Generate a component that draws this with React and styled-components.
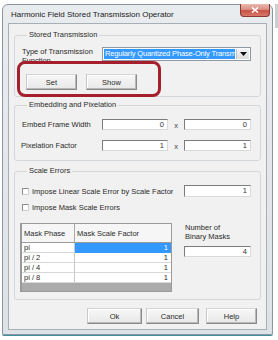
import React from 'react';
import styled, { createGlobalStyle } from 'styled-components';

const Global = createGlobalStyle`
  html, body { margin: 0; padding: 0; background: #fff; }
  body { font-family: "Liberation Sans", Arial, sans-serif; font-size: 7.5px; color: #2a2a2a; }
  #root { width: 278px; height: 340px; overflow: hidden; }
`;

const Page = styled.div`
  display: flex;
  align-items: flex-start;
  width: 278px;
  height: 340px;
`;

const Window = styled.div`
  margin: 4px 0 0 2px;
  width: 271px;
  height: 331px;
  box-sizing: border-box;
  border: 1px solid #8d969e;
  border-radius: 6px 6px 2px 2px;
  background: linear-gradient(#e9ecef, #dde2e7);
  box-shadow: 0 1px 0 #3f8f9d;
  display: flex;
  flex-direction: column;
`;

const Sliver = styled.div`
  margin: 4px 0 0 2px;
  width: 3px;
  height: 24px;
  background: #c9cfd5;
`;

const TitleBar = styled.div`
  height: 18px;
  display: flex;
  align-items: flex-start;
  padding-left: 8px;
`;

const Title = styled.div`
  align-self: center;
  font-size: 8px;
  color: #1a1a1a;
  padding-top: 1px;
`;

const CloseBtn = styled.div`
  margin: -1px 2px 0 auto;
  width: 30px;
  height: 13px;
  box-sizing: border-box;
  border: 1px solid #8a3a33;
  border-top: none;
  border-radius: 0 0 4px 4px;
  background: linear-gradient(#e9b8b0 0%, #dc9084 45%, #c85446 55%, #d9786a 100%);
  display: flex;
  align-items: center;
  justify-content: center;
`;

const Client = styled.div`
  position: relative;
  flex: 1;
  margin: 0 5px 4px 5px;
  border: 1px solid #a6aeb6;
  background: #f1f1f1;
  padding: 6px 5px 0 5px;
  display: flex;
  flex-direction: column;
`;

const Group = styled.fieldset`
  margin: ${p => p.$mt || 0}px 0 0 0;
  padding: ${p => p.$pt}px 9px 0 7px;
  min-width: 0;
  border: 1px solid #d2d7dc;
  border-radius: 3px;
  height: ${p => p.$h}px;
  box-sizing: border-box;
  display: flex;
  flex-direction: column;
`;

const Legend = styled.legend`
  padding: 0 2px;
  margin-left: 5px;
  line-height: 10px;
  color: #2a2a2a;
`;

const Row = styled.div`
  display: flex;
  align-items: ${p => p.$align || 'center'};
  height: ${p => p.$h}px;
  margin-top: ${p => p.$mt || 0}px;
`;

const FieldLabel = styled.div`
  width: ${p => p.$w || 80}px;
  margin-left: ${p => p.$ml || 0}px;
  line-height: 9px;
  color: #2a2a2a;
`;

const Combo = styled.div`
  width: 149px;
  height: 14px;
  box-sizing: border-box;
  border: 1px solid #8e99a4;
  background: #fff;
  display: flex;
  padding: 1px;
`;

const ComboText = styled.div`
  flex: 1;
  background: #3399ff;
  color: #fff;
  white-space: nowrap;
  overflow: hidden;
  line-height: 10px;
  padding-left: 1px;
  letter-spacing: -0.15px;
`;

const ComboArrow = styled.div`
  width: 12px;
  margin-left: 1px;
  background: linear-gradient(#f4f4f4, #dcdcdc);
  border-left: 1px solid #c4c4c4;
  display: flex;
  align-items: center;
  justify-content: center;
`;

const Button = styled.div`
  width: ${p => p.$w}px;
  height: 16px;
  margin-left: ${p => p.$ml || 0}px;
  box-sizing: border-box;
  border: 1px solid #8a8a8a;
  border-top-color: #d4d4d4;
  border-left-color: #c8c8c8;
  background: linear-gradient(#f7f7f7, #e8e8e8);
  box-shadow: inset -1px -1px 0 #b9b9b9, inset 1px 1px 0 #fff;
  display: flex;
  align-items: center;
  justify-content: center;
  color: #2a2a2a;
`;

const Input = styled.div`
  width: ${p => p.$w}px;
  height: ${p => p.$h || 11}px;
  margin-left: ${p => p.$ml || '0px'};
  margin-top: ${p => p.$mt || 0}px;
  box-sizing: border-box;
  border: 1px solid;
  border-color: #7c7c7c #dadada #dadada #7c7c7c;
  background: #fff;
  text-align: right;
  padding-right: 3px;
  line-height: ${p => (p.$h || 11) - 2}px;
  color: #333;
`;

const Times = styled.div`
  width: 16px;
  text-align: center;
  padding-top: 1px;
  color: #444;
`;

const Check = styled.div`
  width: 7px;
  height: 7px;
  box-sizing: border-box;
  border: 1px solid #8d8d8d;
  border-right-color: #cfcfcf;
  border-bottom-color: #cfcfcf;
  background: #fff;
`;

const CheckLabel = styled.div`
  margin-left: 3px;
  color: #2a2a2a;
`;

const Table = styled.div`
  margin-left: -2px;
  width: 152px;
  height: 69px;
  box-sizing: border-box;
  border: 1px solid #9a9a9a;
  border-left: 2px solid #9a9a9a;
  background: #ababab;
  display: grid;
  grid-template-columns: 53px 1fr;
  grid-auto-rows: min-content;
`;

const HeadCell = styled.div`
  height: 18px;
  background: #f6f6f6;
  border-bottom: 1px solid #9a9a9a;
  border-right: ${p => (p.$last ? 'none' : '1px solid #a8a8a8')};
  display: flex;
  align-items: center;
  padding-left: 2px;
  color: #2a2a2a;
`;

const Cell = styled.div`
  height: 9px;
  line-height: 9px;
  border-bottom: 1px solid ${p => (p.$sel ? '#3399ff' : '#d8d8d8')};
  border-right: ${p => (p.$first ? '1px solid #c8c8c8' : 'none')};
  background: ${p => (p.$sel ? '#3399ff' : '#fff')};
  color: ${p => (p.$sel ? '#fff' : '#2a2a2a')};
  text-align: ${p => (p.$num ? 'right' : 'left')};
  padding: 0 3px 0 2px;
`;

const MaskSide = styled.div`
  margin-left: auto;
  width: 67px;
  display: flex;
  flex-direction: column;
`;

const MaskLabel = styled.div`
  padding-left: 1px;
  line-height: 8.5px;
  margin-top: 1px;
  color: #2a2a2a;
`;

const Footer = styled.div`
  display: flex;
  justify-content: flex-end;
  margin-top: 8px;
  padding-right: 4px;
`;

const Highlight = styled.div`
  position: absolute;
  left: 8px;
  top: 37px;
  width: 144px;
  height: 36px;
  box-sizing: border-box;
  border: 3px solid #a51f2d;
  border-radius: 8px;
  pointer-events: none;
`;

const rows = ['pi', 'pi / 2', 'pi / 4', 'pi / 8'];

export default function App() {
  return (
    <Page>
      <Global />
      <Window>
        <TitleBar>
          <Title>Harmonic Field Stored Transmission Operator</Title>
          <CloseBtn>
            <svg width="8" height="6" viewBox="0 0 8 6">
              <path d="M1 0.5 L7 5.5 M7 0.5 L1 5.5" stroke="#fff" strokeWidth="1.6" />
            </svg>
          </CloseBtn>
        </TitleBar>
        <Client>
          <Group $h={67} $pt={7}>
            <Legend>Stored Transmission</Legend>
            <Row $h={14} $align="flex-start">
              <FieldLabel>Type of Transmission Function</FieldLabel>
              <Combo>
                <ComboText>Regularly Quantized Phase-Only Transmission Function</ComboText>
                <ComboArrow>
                  <svg width="7" height="4" viewBox="0 0 7 4">
                    <path d="M0 0 H7 L3.5 4 Z" fill="#111" />
                  </svg>
                </ComboArrow>
              </Combo>
            </Row>
            <Row $h={16} $mt={13}>
              <Button $w={51} $ml={4}>Set</Button>
              <Button $w={51} $ml={9}>Show</Button>
            </Row>
          </Group>
          <Group $h={61} $pt={9} $mt={3}>
            <Legend>Embedding and Pixelation</Legend>
            <Row $h={11}>
              <FieldLabel>Embed Frame Width</FieldLabel>
              <Input $w={66}>0</Input>
              <Times>x</Times>
              <Input $w={67}>0</Input>
            </Row>
            <Row $h={11} $mt={10}>
              <FieldLabel $ml={-1} $w={81}>Pixelation Factor</FieldLabel>
              <Input $w={66}>1</Input>
              <Times>x</Times>
              <Input $w={67}>1</Input>
            </Row>
          </Group>
          <Group $h={134} $pt={9} $mt={5}>
            <Legend>Scale Errors</Legend>
            <Row $h={12}>
              <Check />
              <CheckLabel>Impose Linear Scale Error by Scale Factor</CheckLabel>
              <Input $w={67} $h={12} $ml="auto">1</Input>
            </Row>
            <Row $h={10} $mt={5}>
              <Check />
              <CheckLabel>Impose Mask Scale Errors</CheckLabel>
            </Row>
            <Row $h={69} $mt={11} $align="flex-start">
              <Table>
                <HeadCell>Mask Phase</HeadCell>
                <HeadCell $last>Mask Scale Factor</HeadCell>
                {rows.map((r, i) => (
                  <React.Fragment key={r}>
                    <Cell $first>{r}</Cell>
                    <Cell $num $sel={i === 0}>1</Cell>
                  </React.Fragment>
                ))}
              </Table>
              <MaskSide>
                <MaskLabel>Number of<br />Binary Masks</MaskLabel>
                <Input $w={67} $mt={5}>4</Input>
              </MaskSide>
            </Row>
          </Group>
          <Footer>
            <Button $w={55}>Ok</Button>
            <Button $w={53} $ml={4}>Cancel</Button>
            <Button $w={51} $ml={7}>Help</Button>
          </Footer>
          <Highlight />
        </Client>
      </Window>
      <Sliver />
    </Page>
  );
}
